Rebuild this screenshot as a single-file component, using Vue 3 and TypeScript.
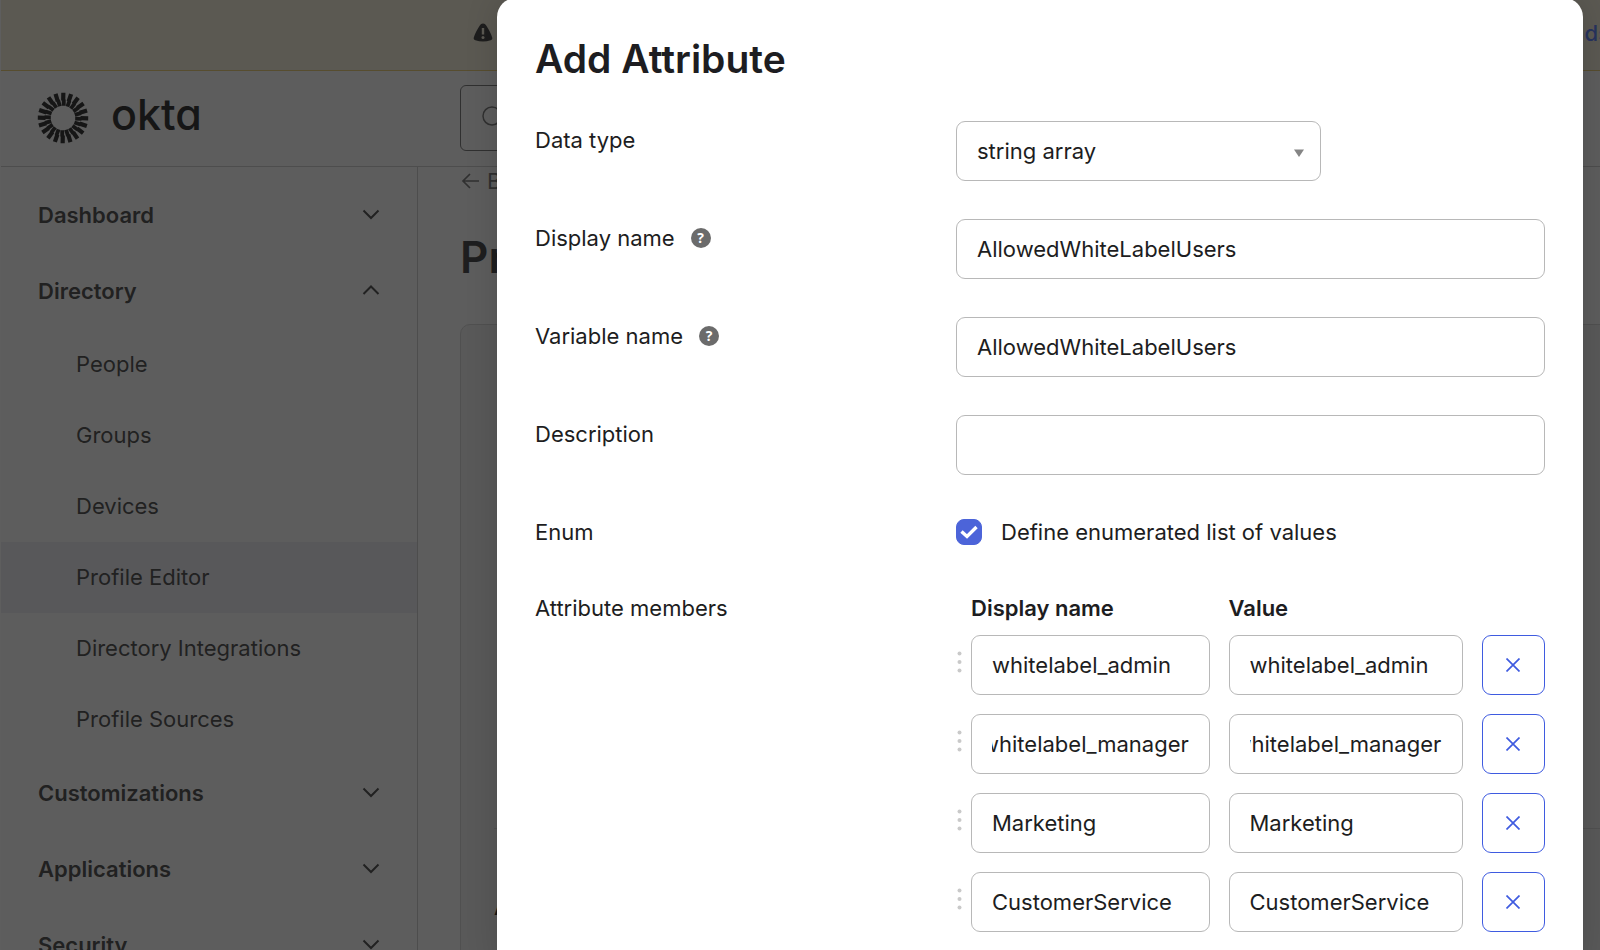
<script setup lang="ts">
import { nextTick, onMounted, ref } from 'vue'

interface NavGroup {
  label: string
  open?: boolean
  items?: string[]
}

interface Member {
  name: string
  value: string
}

const groups: NavGroup[] = [
  { label: 'Dashboard' },
  {
    label: 'Directory',
    open: true,
    items: ['People', 'Groups', 'Devices', 'Profile Editor', 'Directory Integrations', 'Profile Sources'],
  },
  { label: 'Customizations' },
  { label: 'Applications' },
  { label: 'Security' },
]
const current = 'Profile Editor'

const dataType = ref('string array')
const displayName = ref('AllowedWhiteLabelUsers')
const variableName = ref('AllowedWhiteLabelUsers')
const description = ref('')
const isEnum = ref(true)
const members = ref<Member[]>([
  { name: 'whitelabel_admin', value: 'whitelabel_admin' },
  { name: 'whitelabel_manager', value: 'whitelabel_manager' },
  { name: 'Marketing', value: 'Marketing' },
  { name: 'CustomerService', value: 'CustomerService' },
])

const rays = Array.from({ length: 20 }, (_, i) => i * 18 + 1)
const membersEl = ref<HTMLElement | null>(null)

function removeMember(index: number) {
  members.value.splice(index, 1)
}

onMounted(async () => {
  await nextTick()
  await document.fonts.ready
  membersEl.value?.querySelectorAll('input').forEach((el) => {
    el.scrollLeft = el.scrollWidth
  })
})
</script>

<template>
  <div class="page">
    <div class="banner">
      <svg class="warn" width="20" height="19" viewBox="0 0 20 19" aria-hidden="true">
        <path d="M10 0.5C11.5 0.5 12.4 1.4 13.2 2.6C15.8 6.400 18 10.500 19.200 14.600C19.600 16 19 16.900 17.700 17.300C12.600 18.900 7.400 18.900 2.300 17.300C1 16.900 0.400 16 0.800 14.600C2 10.500 4.200 6.400 6.800 2.600C7.600 1.400 8.500 0.500 10 0.500Z" fill="#1a1a1a" />
        <path d="M10 5v6.500" stroke="#f8f1d8" stroke-width="2.400" />
        <circle cx="10" cy="14.500" r="1.500" fill="#f8f1d8" />
      </svg>
      <a class="banner-link" href="#">ds</a>
    </div>

    <header class="header">
      <a class="brand" href="#" aria-label="okta home">
        <svg width="52" height="52" viewBox="-26 -26 52 52" aria-hidden="true">
          <g v-for="r in rays" :key="r" :transform="`rotate(${r})`">
            <path d="M-2.200 -25.200H2V-18.500H2.400V-12.200H-1.400V-17.500H-2.200Z" fill="#000" />
          </g>
        </svg>
        <span class="wordmark">okta</span>
      </a>
      <div class="search">
        <svg width="26" height="26" viewBox="0 0 26 26" aria-hidden="true">
          <circle cx="11" cy="11" r="9" fill="none" stroke="#5e5e5e" stroke-width="1.500" />
          <path d="M17.500 17.500L24 24" stroke="#5e5e5e" stroke-width="1.500" />
        </svg>
        <input type="search" aria-label="Search" />
      </div>
    </header>

    <div class="body">
      <nav class="sidebar">
        <div v-for="g in groups" :key="g.label">
          <button type="button" class="group" :aria-expanded="!!g.open">
            <span>{{ g.label }}</span>
            <svg width="18" height="12" viewBox="0 0 18 12" aria-hidden="true">
              <path :d="g.open ? 'M1.500 9L9 1.500L16.500 9' : 'M1.500 1.500L9 9L16.500 1.500'" fill="none" stroke="#2a2a2a" stroke-width="2" />
            </svg>
          </button>
          <a v-for="item in g.items" :key="item" href="#" class="item" :class="{ current: item === current }">{{ item }}</a>
        </div>
      </nav>

      <main class="main">
        <a class="back" href="#">
          <svg width="18" height="16" viewBox="0 0 18 16" aria-hidden="true">
            <path d="M18 8H2M9 1L2 8L9 15" fill="none" stroke="#5e5e5e" stroke-width="1.700" />
          </svg>
          <span>B</span>
        </a>
        <h1 class="page-title">Pr</h1>
        <section class="card">
          <div class="card-top"></div>
          <h2 class="card-title">A</h2>
        </section>
      </main>
    </div>

    <div class="overlay">
      <form class="modal" role="dialog" aria-labelledby="modal-title" @submit.prevent>
        <h2 id="modal-title" class="modal-title">Add Attribute</h2>

        <div class="row">
          <label for="data-type">Data type</label>
          <div class="select">
            <select id="data-type" v-model="dataType">
              <option>string array</option>
            </select>
            <svg width="10" height="8" viewBox="0 0 10 8" aria-hidden="true">
              <path d="M0 0.500H10L5 8Z" fill="#858585" />
            </svg>
          </div>
        </div>

        <div class="row">
          <div class="label-line">
            <label for="display-name">Display name</label>
            <button type="button" class="help" aria-label="Help with display name">?</button>
          </div>
          <input id="display-name" v-model="displayName" class="field" type="text" />
        </div>

        <div class="row">
          <div class="label-line">
            <label for="variable-name">Variable name</label>
            <button type="button" class="help" aria-label="Help with variable name">?</button>
          </div>
          <input id="variable-name" v-model="variableName" class="field" type="text" />
        </div>

        <div class="row">
          <label for="description">Description</label>
          <input id="description" v-model="description" class="field" type="text" />
        </div>

        <div class="row">
          <span>Enum</span>
          <label class="check">
            <span class="box">
              <input v-model="isEnum" type="checkbox" />
              <svg v-if="isEnum" width="26" height="26" viewBox="0 0 26 26" aria-hidden="true">
                <path d="M5.500 12.500L11 17.500L20.500 8" fill="none" stroke="#fff" stroke-width="3.400" />
              </svg>
            </span>
            <span>Define enumerated list of values</span>
          </label>
        </div>

        <div class="row">
          <span>Attribute members</span>
          <div ref="membersEl" class="members">
            <div class="member">
              <span class="handle"></span>
              <div class="cells head">
                <span id="col-name">Display name</span>
                <span id="col-value">Value</span>
              </div>
            </div>
            <div v-for="(m, i) in members" :key="i" class="member">
              <span class="handle">
                <svg width="5" height="22" viewBox="0 0 5 22" aria-hidden="true">
                  <circle cx="2.500" cy="2.500" r="2" fill="#c9c9c9" />
                  <circle cx="2.500" cy="11" r="2" fill="#c9c9c9" />
                  <circle cx="2.500" cy="19.500" r="2" fill="#c9c9c9" />
                </svg>
              </span>
              <div class="cells">
                <input v-model="m.name" class="field" type="text" aria-labelledby="col-name" />
                <input v-model="m.value" class="field" type="text" aria-labelledby="col-value" />
                <button type="button" class="remove" aria-label="Remove" @click="removeMember(i)">
                  <svg width="14" height="14" viewBox="0 0 14 14" aria-hidden="true">
                    <path d="M0.500 0.500L13.500 13.500M13.500 0.500L0.500 13.500" stroke="#3f5be0" stroke-width="1.700" />
                  </svg>
                </button>
              </div>
            </div>
          </div>
        </div>
      </form>
    </div>
  </div>
</template>

<style>
body {
  margin: 0;
}
</style>

<style scoped>
* {
  box-sizing: border-box;
}
.page {
  position: relative;
  display: flex;
  flex-direction: column;
  height: 100vh;
  overflow: hidden;
  background: #fff;
  color: #1d1d21;
  font-family: Inter, "Liberation Sans", sans-serif;
  font-size: 22px;
  line-height: 38px;
}
button,
input,
select {
  margin: 0;
  font: inherit;
  color: inherit;
}
a {
  color: inherit;
  text-decoration: none;
}
.banner {
  display: flex;
  flex: none;
  align-items: center;
  justify-content: space-between;
  height: 71px;
  padding-bottom: 5px;
  padding-left: 473px;
  border-bottom: 1px solid #e8c65a;
  background: #f8f1d8;
  overflow: hidden;
}
.banner-link {
  margin-right: -10px;
  color: #3f68ff;
  font-weight: 500;
}
.header {
  display: flex;
  flex: none;
  align-items: center;
  height: 96px;
  padding-bottom: 2px;
  padding-left: 37px;
  border-bottom: 1px solid #c4c4c4;
}
.brand {
  display: flex;
  flex: none;
  align-items: center;
  gap: 22px;
  width: 423px;
}
.wordmark {
  padding-bottom: 8px;
  color: #000;
  font-size: 43px;
  font-weight: 500;
  line-height: 44px;
  font-feature-settings: "cv11";
}
.search {
  display: flex;
  flex: 1;
  align-items: center;
  height: 66px;
  margin-right: 200px;
  padding-left: 20px;
  border: 1px solid #5e5e5e;
  border-radius: 6px;
}
.search input {
  flex: 1;
  border: 0;
  background: none;
}
.body {
  display: flex;
  flex: 1;
  min-height: 0;
}
.sidebar {
  flex: none;
  width: 418px;
  padding-top: 10px;
  border-right: 1px solid #c4c4c4;
  overflow: hidden;
  color: #2a2a2a;
}
.group {
  display: flex;
  align-items: center;
  justify-content: space-between;
  width: 100%;
  height: 76px;
  padding: 0 37px 1px 38px;
  border: 0;
  background: none;
  font-weight: 600;
}
.item {
  display: flex;
  align-items: center;
  height: 71px;
  padding-bottom: 1px;
  padding-left: 76px;
}
.current {
  background: #ebebf5;
}
.main {
  flex: 1;
  min-width: 0;
  padding-left: 42px;
  overflow: hidden;
}
.back {
  display: flex;
  align-items: center;
  gap: 8px;
  padding-left: 1px;
  color: #5e5e5e;
  line-height: 28px;
}
.page-title {
  margin: 36px 0 41px;
  font-size: 44px;
  font-weight: 600;
  line-height: 52px;
}
.card {
  height: 800px;
  margin-right: -20px;
  padding-left: 33px;
  border: 1px solid #cfcfcf;
  border-radius: 10px;
  background: #f0f0f0;
}
.card-top {
  height: 504px;
  border-bottom: 1px solid #cfcfcf;
}
.card-title {
  margin: 59px 0 0;
  color: #000;
  font-size: 22px;
  font-weight: 600;
}
.overlay {
  position: absolute;
  inset: 0;
  display: flex;
  align-items: flex-start;
  padding: 0 17px 0 496px;
  border-left: 1px solid #5e5e5e;
  background: rgba(30, 30, 30, 0.72);
  overflow: hidden;
}
.modal {
  display: flex;
  flex: 1;
  flex-direction: column;
  gap: 38px;
  min-width: 0;
  min-height: 100vh;
  margin-top: -2px;
  padding: 36px 38px;
  border-radius: 19px;
  background: #fff;
  box-shadow: 0 0 32px rgba(0, 0, 0, 0.15);
}
.modal-title {
  margin: 0;
  font-size: 39px;
  font-weight: 600;
  line-height: 49px;
}
.row {
  display: grid;
  grid-template-columns: 421px 1fr;
  align-items: start;
}
.label-line {
  display: flex;
  align-items: center;
  gap: 16px;
}
.help {
  width: 20px;
  height: 20px;
  padding: 0;
  border: 0;
  border-radius: 50%;
  background: #6b6b6b;
  color: #fff;
  font-family: "Open Sans", sans-serif;
  font-size: 14px;
  font-weight: 700;
  line-height: 20px;
  text-align: center;
}
.field,
.select select {
  width: 100%;
  min-width: 0;
  height: 60px;
  padding: 0 20px;
  border: 1px solid #b8b8b8;
  border-radius: 9px;
  background: #fff;
}
.select {
  position: relative;
  width: 365px;
}
.select select {
  display: block;
  appearance: none;
}
.select svg {
  position: absolute;
  top: 28px;
  right: 17px;
  pointer-events: none;
}
.check {
  display: flex;
  align-items: center;
  gap: 19px;
}
.box {
  position: relative;
  display: flex;
}
.box input {
  width: 26px;
  height: 26px;
  border: 1px solid #4c64d9;
  border-radius: 8px;
  appearance: none;
}
.box input:checked {
  background: #4c64d9;
}
.box svg {
  position: absolute;
  inset: 0;
  pointer-events: none;
}
.members {
  display: flex;
  flex-direction: column;
  gap: 19px;
}
.member {
  display: flex;
  align-items: center;
}
.member:first-child {
  margin-bottom: -11px;
}
.handle {
  display: flex;
  flex: none;
  width: 15px;
  padding: 0 0 7px 1px;
}
.cells {
  display: grid;
  flex: 1;
  grid-template-columns: 238fr 234fr 63px;
  gap: 19px;
}
.head {
  font-weight: 600;
}
.remove {
  display: flex;
  align-items: center;
  justify-content: center;
  height: 60px;
  padding: 0;
  border: 1px solid #3f5be0;
  border-radius: 9px;
  background: #fff;
}
</style>
